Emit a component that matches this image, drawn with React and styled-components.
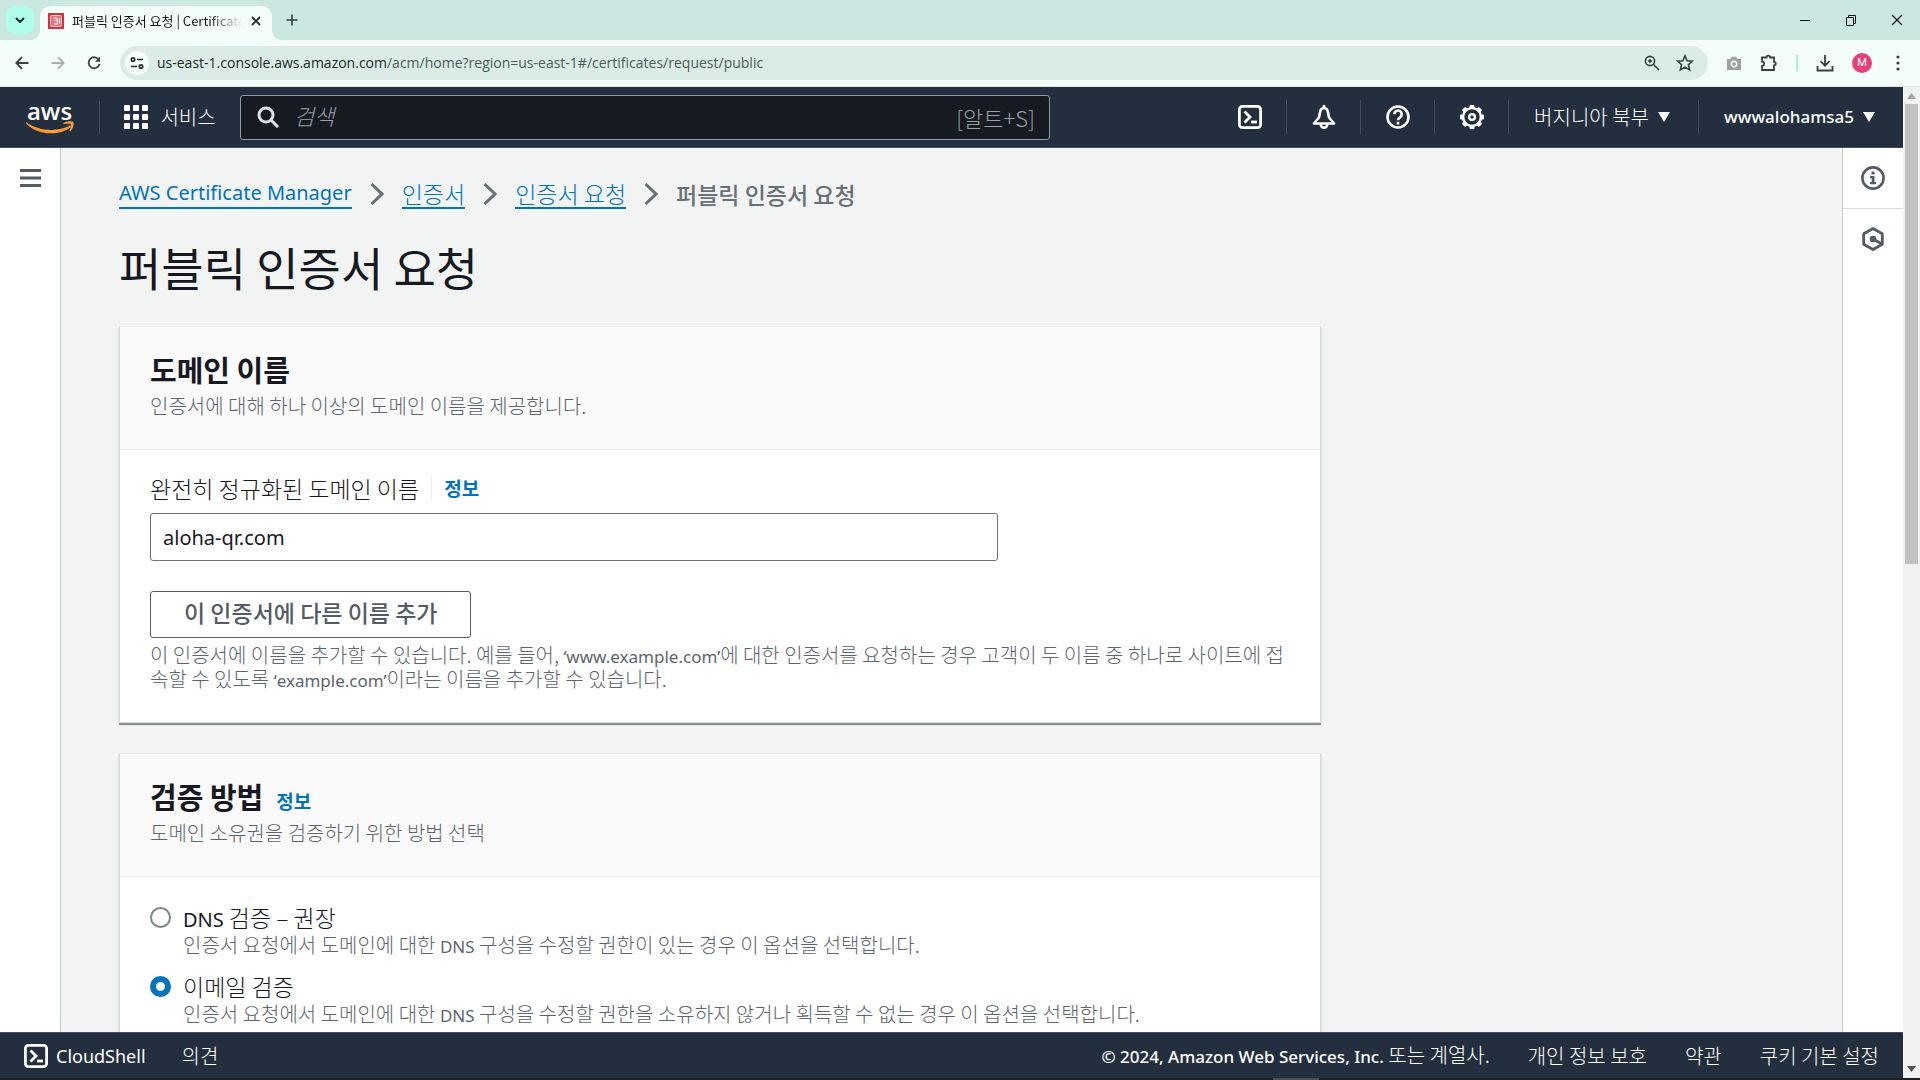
import { useState } from 'react';
import styled, { createGlobalStyle } from 'styled-components';

function App() {
  return (
    <Window>
      <GlobalStyle />
      <TabStrip />
      <Toolbar />
      <Viewport>
        <Page>
          <TopNav />
          <Body>
            <SideRail $side="left">
              <RailButton aria-label="탐색 열기">
                <MenuIcon />
              </RailButton>
            </SideRail>
            <Content />
            <SideRail $side="right">
              <RailButton aria-label="도움말 패널">
                <InfoIcon />
              </RailButton>
              <RailButton aria-label="자습서">
                <HexIcon />
              </RailButton>
            </SideRail>
          </Body>
          <Footer />
        </Page>
        <Scrollbar />
      </Viewport>
      <Taskbar>
        <TaskMark />
      </Taskbar>
    </Window>
  );
}

/* Browser chrome */

function TabStrip() {
  return (
    <Strip>
      <TabSearch aria-label="탭 검색">
        <svg width="10" height="6" viewBox="0 0 10 6">
          <path d="M1 1l4 4 4-4" fill="none" stroke="#1b2a27" strokeWidth="2" />
        </svg>
      </TabSearch>
      <Tab>
        <Favicon viewBox="0 0 16 16">
          <rect width="16" height="16" fill="#d6303f" />
          <rect x="2.5" y="2.5" width="11" height="11" rx="1" fill="#ef6f79" stroke="#fbd3d6" />
          <path d="M5.500 5h3.500v2.500H6.500M6.500 7.500h3v3.500H6M11.500 5v6" fill="none" stroke="#fff" />
        </Favicon>
        <TabTitle>퍼블릭 인증서 요청 | Certificate</TabTitle>
        <PlainButton aria-label="탭 닫기">
          <svg width="10" height="10" viewBox="0 0 10 10">
            <path d="M1 1l8 8M9 1L1 9" stroke="#22302d" strokeWidth="1.800" />
          </svg>
        </PlainButton>
      </Tab>
      <NewTab aria-label="새 탭">
        <svg width="12" height="12" viewBox="0 0 12 12">
          <path d="M6 0.500v11M0.500 6h11" stroke="#2f3f3b" strokeWidth="1.600" />
        </svg>
      </NewTab>
      <WindowControls>
        <PlainButton aria-label="최소화">
          <svg width="12" height="12" viewBox="0 0 12 12">
            <path d="M1 6.500h10" stroke="#111" />
          </svg>
        </PlainButton>
        <PlainButton aria-label="이전 크기로">
          <svg width="12" height="12" viewBox="0 0 12 12">
            <path d="M1.500 3.500h7v8h-7zM3.500 3.500v-2h7v8h-2" fill="none" stroke="#111" />
          </svg>
        </PlainButton>
        <PlainButton aria-label="닫기">
          <svg width="12" height="12" viewBox="0 0 12 12">
            <path d="M1 1l10 10M11 1L1 11" stroke="#111" strokeWidth="1.200" />
          </svg>
        </PlainButton>
      </WindowControls>
    </Strip>
  );
}

function Toolbar() {
  return (
    <Bar>
      <BarButton aria-label="뒤로">
        <svg width="14" height="14" viewBox="0 0 14 14">
          <path d="M13.500 7H1.500M7 1.200L1.300 7 7 12.800" fill="none" stroke="#33423f" strokeWidth="1.800" />
        </svg>
      </BarButton>
      <BarButton aria-label="앞으로">
        <svg width="14" height="14" viewBox="0 0 14 14">
          <path d="M.5 7h12M7 1.200L12.700 7 7 12.800" fill="none" stroke="#a3b0ad" strokeWidth="1.800" />
        </svg>
      </BarButton>
      <BarButton aria-label="새로고침">
        <svg width="14" height="14" viewBox="0 0 14 14">
          <path d="M12 4.200A5.500 5.500 0 1 0 12.500 8" fill="none" stroke="#33423f" strokeWidth="1.800" />
          <path d="M13 .8v5H8z" fill="#33423f" />
        </svg>
      </BarButton>
      <AddressBar>
        <SiteInfo aria-label="사이트 정보">
          <svg width="14" height="14" viewBox="0 0 14 14">
            <g fill="none" stroke="#22302d" strokeWidth="1.700">
              <circle cx="3" cy="3.500" r="1.700" />
              <path d="M7 3.500h6M1 10.500h6" />
              <circle cx="11" cy="10.500" r="1.700" />
            </g>
          </svg>
        </SiteInfo>
        <Url>
          us-east-1.console.aws.amazon.com
          <span>/acm/home?region=us-east-1#/certificates/request/public</span>
        </Url>
        <PlainButton aria-label="확대/축소">
          <svg width="16" height="16" viewBox="0 0 16 16">
            <g fill="none" stroke="#33423f" strokeWidth="1.600">
              <circle cx="6" cy="6" r="4.600" />
              <path d="M9.500 9.500l5.500 5.500" />
            </g>
            <path d="M6 3.800L8.200 6 6 8.200 3.800 6z" fill="#33423f" />
          </svg>
        </PlainButton>
        <PlainButton aria-label="북마크">
          <svg width="18" height="18" viewBox="0 0 18 18">
            <path
              d="M9 1.800l2.100 4.900 5.300.5-4 3.500 1.200 5.200L9 13.100l-4.600 2.800 1.200-5.200-4-3.500 5.300-.5z"
              fill="none"
              stroke="#33423f"
              strokeWidth="1.600"
            />
          </svg>
        </PlainButton>
      </AddressBar>
      <Extensions>
        <PlainButton aria-label="캡처">
          <svg width="16" height="14" viewBox="0 0 16 14">
            <path d="M1 3h3.500L6 .8h4L11.500 3H15v11H1z" fill="#9aa3a1" />
            <circle cx="8" cy="8" r="2.700" fill="none" stroke="#fff" strokeWidth="1.500" />
          </svg>
        </PlainButton>
        <PlainButton aria-label="확장 프로그램">
          <svg width="18" height="18" viewBox="0 0 18 18">
            <path
              d="M2 3.500h4.500a1.800 1.800 0 0 1 3.600 0H14v4.300a1.800 1.800 0 0 1 0 3.600V16H2v-4.200a2.100 2.100 0 0 0 0-4.200z"
              fill="none"
              stroke="#33423f"
              strokeWidth="1.800"
            />
          </svg>
        </PlainButton>
        <BarDivider />
        <PlainButton aria-label="다운로드">
          <svg width="18" height="18" viewBox="0 0 18 18">
            <path d="M9 1v10.500M4.500 7.200L9 11.700l4.500-4.500M1.500 12v4.500h15V12" fill="none" stroke="#33423f" strokeWidth="1.800" />
          </svg>
        </PlainButton>
        <Avatar>M</Avatar>
        <PlainButton aria-label="메뉴">
          <svg width="4" height="16" viewBox="0 0 4 16">
            <g fill="#33423f">
              <circle cx="2" cy="2" r="1.600" />
              <circle cx="2" cy="8" r="1.600" />
              <circle cx="2" cy="14" r="1.600" />
            </g>
          </svg>
        </PlainButton>
      </Extensions>
    </Bar>
  );
}

function Scrollbar() {
  return (
    <Track>
      <svg width="9" height="6" viewBox="0 0 9 6">
        <path d="M0 6l4.500-6L9 6z" fill="#a3a3a3" />
      </svg>
      <Thumb />
      <svg width="9" height="6" viewBox="0 0 9 6">
        <path d="M0 0l4.500 6L9 0z" fill="#505050" />
      </svg>
    </Track>
  );
}

/* Console */

function TopNav() {
  return (
    <Nav>
      <Logo href="#home">
        aws
        <svg width="48" height="13" viewBox="0 0 48 13">
          <path d="M.6 1.500C13 10.500 32 11 43.500 4.800c1.600-.8 2.200.6.900 1.600C33 15 12 14.800.2 2.400c-.5-.6-.2-1.200.4-.9z" fill="#f79b34" />
          <path d="M37.500 2c2.600-1.900 8-2.200 9.600-1.100 1.300 1 .2 6.500-2.600 9.300-.7.600-1.200.3-.9-.5.800-1.900 1.800-5.400 1.200-6.300-.8-.9-4.700-.6-6.600-.4-.9.100-1.300-.5-.7-1z" fill="#f79b34" />
        </svg>
      </Logo>
      <Services>
        <svg width="24" height="24" viewBox="0 0 24 24" fill="#fff">
          {[0, 9, 18].map((y) => [0, 9, 18].map((x) => <rect key={`${x}-${y}`} x={x} y={y} width="6" height="6" rx="1" />))}
        </svg>
        서비스
      </Services>
      <SearchBox>
        <svg width="22" height="22" viewBox="0 0 22 22">
          <g fill="none" stroke="#dfe3e6" strokeWidth="3">
            <circle cx="9" cy="9" r="7" />
            <path d="M14 14l7 7" />
          </g>
        </svg>
        <input type="search" aria-label="검색" placeholder="검색" />
        <span>[알트+S]</span>
      </SearchBox>
      <NavItems>
        <NavItem aria-label="CloudShell">
          <ShellIcon />
        </NavItem>
        <NavItem aria-label="알림">
          <svg width="24" height="24" viewBox="0 0 24 24">
            <g fill="none" stroke="#fff" strokeWidth="2.600" strokeLinejoin="round">
              <path d="M12 0v3M2 18.500h20L17 12.500l-1.200-6C15.300 4.300 14 3 12 3S8.700 4.300 8.200 6.500L7 12.500z" />
              <path d="M8.800 19v.6a3.200 3.200 0 0 0 6.400 0V19" />
            </g>
          </svg>
        </NavItem>
        <NavItem aria-label="지원">
          <svg width="24" height="24" viewBox="0 0 24 24">
            <g fill="none" stroke="#fff" strokeWidth="2.600">
              <circle cx="12" cy="12" r="10.500" />
              <path d="M8.300 9.300a3.700 3.700 0 1 1 5.800 3c-1.400 1-2.100 1.500-2.100 3" />
              <path d="M12 16.800v2.700" />
            </g>
          </svg>
        </NavItem>
        <NavItem aria-label="설정">
          <GearIcon />
        </NavItem>
        <NavMenu>
          버지니아 북부
          <Caret />
        </NavMenu>
        <NavMenu $latin>
          wwwalohamsa5
          <Caret />
        </NavMenu>
      </NavItems>
    </Nav>
  );
}

function Content() {
  const [method, setMethod] = useState('email');

  return (
    <Main>
      <Breadcrumbs aria-label="이동 경로">
        <CrumbLink href="#acm" $latin>AWS Certificate Manager</CrumbLink>
        <Chevron />
        <CrumbLink href="#certificates">인증서</CrumbLink>
        <Chevron />
        <CrumbLink href="#request">인증서 요청</CrumbLink>
        <Chevron />
        <CurrentCrumb>퍼블릭 인증서 요청</CurrentCrumb>
      </Breadcrumbs>
      <PageTitle>퍼블릭 인증서 요청</PageTitle>

      <Card>
        <CardHeader>
          <CardTitle>도메인 이름</CardTitle>
          <Description>인증서에 대해 하나 이상의 도메인 이름을 제공합니다.</Description>
        </CardHeader>
        <CardBody>
          <FieldHead>
            <label htmlFor="domain">완전히 정규화된 도메인 이름</label>
            <LabelDivider />
            <InfoLink href="#domain-info">정보</InfoLink>
          </FieldHead>
          <DomainInput id="domain" type="text" defaultValue="aloha-qr.com" />
          <AddButton type="button">이 인증서에 다른 이름 추가</AddButton>
          <Description>
            이 인증서에 이름을 추가할 수 있습니다. 예를 들어, <Latin>‘www.example.com’</Latin>에 대한 인증서를 요청하는 경우 고객이 두 이름 중 하나로 사이트에 접속할 수 있도록 <Latin>‘example.com’</Latin>이라는 이름을 추가할 수 있습니다.
          </Description>
        </CardBody>
      </Card>

      <Card>
        <CardHeader>
          <CardTitle>
            검증 방법
            <InfoLink href="#validation-info">정보</InfoLink>
          </CardTitle>
          <Description>도메인 소유권을 검증하기 위한 방법 선택</Description>
        </CardHeader>
        <CardBody>
          <Option>
            <input type="radio" name="method" checked={method === 'dns'} onChange={() => setMethod('dns')} />
            <span>
              <Latin $large>DNS</Latin> 검증 – 권장
              <Description as="small">
                인증서 요청에서 도메인에 대한 <Latin>DNS</Latin> 구성을 수정할 권한이 있는 경우 이 옵션을 선택합니다.
              </Description>
            </span>
          </Option>
          <Option>
            <input type="radio" name="method" checked={method === 'email'} onChange={() => setMethod('email')} />
            <span>
              이메일 검증
              <Description as="small">
                인증서 요청에서 도메인에 대한 <Latin>DNS</Latin> 구성을 수정할 권한을 소유하지 않거나 획득할 수 없는 경우 이 옵션을 선택합니다.
              </Description>
            </span>
          </Option>
        </CardBody>
      </Card>
    </Main>
  );
}

function Footer() {
  return (
    <FooterBar>
      <FooterButton $latin>
        <ShellIcon />
        CloudShell
      </FooterButton>
      <FooterButton>의견</FooterButton>
      <Legal>
        <span><b>© 2024, Amazon Web Services, Inc.</b> 또는 계열사.</span>
        <a href="#privacy">개인 정보 보호</a>
        <a href="#terms">약관</a>
        <a href="#cookies">쿠키 기본 설정</a>
      </Legal>
    </FooterBar>
  );
}

/* Icons */

function ShellIcon() {
  return (
    <svg width="24" height="24" viewBox="0 0 24 24">
      <g fill="none" stroke="#fff" strokeWidth="2.800">
        <rect x="1.400" y="1.400" width="21.200" height="21.200" rx="3" />
        <path d="M6.500 6.500l5.500 5.500-5.500 5.500" />
        <path d="M13 17h6" />
      </g>
    </svg>
  );
}

function GearIcon() {
  const teeth = [0, 45, 90, 135, 180, 225, 270, 315];
  return (
    <svg width="24" height="24" viewBox="0 0 24 24">
      {teeth.map((angle) => (
        <rect key={angle} x="9.500" y="0" width="5" height="4" rx="1" fill="#fff" transform={`rotate(${angle} 12 12)`} />
      ))}
      <circle cx="12" cy="12" r="8.900" fill="none" stroke="#fff" strokeWidth="2.400" />
      <circle cx="12" cy="12" r="2.900" fill="none" stroke="#fff" strokeWidth="2.400" />
    </svg>
  );
}

function MenuIcon() {
  return (
    <svg width="21" height="18" viewBox="0 0 21 18">
      <path d="M0 1.500h21M0 9h21M0 16.500h21" stroke="#545b64" strokeWidth="2.800" />
    </svg>
  );
}

function InfoIcon() {
  return (
    <svg width="24" height="24" viewBox="0 0 24 24">
      <circle cx="12" cy="12" r="10.600" fill="none" stroke="#545b64" strokeWidth="2.600" />
      <path d="M10.500 5.500h3v3h-3zM9 10h4.500v6H15v2.300H9V16h1.700v-3.700H9z" fill="#545b64" />
    </svg>
  );
}

function HexIcon() {
  return (
    <svg width="24" height="24" viewBox="0 0 24 24">
      <path d="M12 1.500l9.300 5.200v10.600L12 22.500l-9.300-5.200V6.700z" fill="none" stroke="#545b64" strokeWidth="2.800" strokeLinejoin="round" />
      <circle cx="12" cy="12" r="3.300" fill="#545b64" />
      <path d="M12 12l9 5" stroke="#545b64" strokeWidth="2.800" />
    </svg>
  );
}

function Chevron() {
  return (
    <svg width="14" height="22" viewBox="0 0 14 22">
      <path d="M1.500 1l10.500 10L1.500 21" fill="none" stroke="#687078" strokeWidth="3" />
    </svg>
  );
}

function Caret() {
  return (
    <svg width="12" height="10" viewBox="0 0 12 10">
      <path d="M0 0h12L6 10z" fill="#fff" />
    </svg>
  );
}

const GlobalStyle = createGlobalStyle`
  *, *::before, *::after {
    box-sizing: border-box;
  }

  body {
    margin: 0;
    font-family: 'Noto Sans CJK KR', 'Noto Sans', sans-serif;
    font-weight: 300;
    color: #16191f;
  }

  button, input {
    font: inherit;
    color: inherit;
  }

  svg {
    display: block;
    flex: none;
  }
`;

const latin = "'Noto Sans', 'Noto Sans CJK KR', sans-serif";

const Window = styled.div`
  display: flex;
  flex-direction: column;
  height: 100vh;
  overflow: hidden;
`;

const PlainButton = styled.button`
  display: flex;
  align-items: center;
  justify-content: center;
  padding: 0;
  border: 0;
  background: none;
`;

const Latin = styled.span`
  font-family: ${latin};
  font-size: ${(props) => (props.$large ? 20 : 17)}px;
  font-weight: 400;
  line-height: 20px;
`;

const Strip = styled.header`
  flex: none;
  display: flex;
  align-items: center;
  height: 40px;
  padding: 0 17px 0 6px;
  background: #cbe7e1;
`;

const TabSearch = styled(PlainButton)`
  width: 28px;
  height: 28px;
  border-radius: 9px;
  background: #b1fdec;
`;

const Tab = styled.div`
  position: relative;
  display: flex;
  align-items: center;
  gap: 8px;
  width: 232px;
  height: 34px;
  margin: 6px 0 0 6px;
  padding: 0 11px 4px 8px;
  border-radius: 10px 10px 0 0;
  background: #f3fdfa;

  &::before,
  &::after {
    content: '';
    position: absolute;
    bottom: 0;
    width: 10px;
    height: 10px;
  }

  &::before {
    right: 100%;
    background: radial-gradient(circle at 0 0, transparent 10px, #f3fdfa 10px);
  }

  &::after {
    left: 100%;
    background: radial-gradient(circle at 100% 0, transparent 10px, #f3fdfa 10px);
  }
`;

const Favicon = styled.svg`
  width: 16px;
  height: 16px;
`;

const TabTitle = styled.span`
  flex: 1;
  overflow: hidden;
  white-space: nowrap;
  font-size: 13px;
  line-height: 20px;
  font-weight: 400;
  mask-image: linear-gradient(to right, #000 80%, transparent);
`;

const NewTab = styled(PlainButton)`
  width: 28px;
  height: 28px;
  margin-left: 6px;
`;

const WindowControls = styled.div`
  display: flex;
  gap: 34px;
  margin-left: auto;
`;

const Bar = styled.div`
  flex: none;
  display: flex;
  align-items: center;
  height: 47px;
  padding: 0 20px 0 4px;
  border-bottom: 1px solid #dbe5e2;
  background: #f3fdfa;
`;

const BarButton = styled(PlainButton)`
  width: 36px;
  height: 36px;
`;

const AddressBar = styled.div`
  flex: 1;
  display: flex;
  align-items: center;
  gap: 16px;
  height: 34px;
  margin-left: 8px;
  padding: 0 14px 0 5px;
  border-radius: 17px;
  background: #dbece7;
`;

const SiteInfo = styled(PlainButton)`
  width: 24px;
  height: 24px;
  border-radius: 50%;
  background: #f6fffc;
`;

const Url = styled.span`
  flex: 1;
  margin-left: -8px;
  font-family: 'Open Sans', 'Noto Sans', sans-serif;
  font-size: 14px;
  font-weight: 400;
  line-height: 20px;
  color: #1c2927;

  span {
    color: #4c5c58;
  }
`;

const Extensions = styled.div`
  display: flex;
  align-items: center;
  gap: 18px;
  margin-left: 18px;
`;

const BarDivider = styled.span`
  width: 2px;
  height: 16px;
  background: #a8ecdc;
`;

const Avatar = styled.span`
  width: 20px;
  height: 20px;
  margin-right: 6px;
  border-radius: 50%;
  background: #e6407b;
  color: #fff;
  font-family: Roboto, sans-serif;
  font-size: 11px;
  font-weight: 400;
  line-height: 20px;
  text-align: center;
`;

const Viewport = styled.div`
  flex: 1;
  display: flex;
  min-height: 0;
`;

const Page = styled.div`
  flex: 1;
  display: flex;
  flex-direction: column;
  min-width: 0;
`;

const Track = styled.div`
  display: flex;
  flex-direction: column;
  align-items: center;
  width: 17px;
  padding: 6px 0;
  background: #f1f1f1;
`;

const Thumb = styled.div`
  width: 13px;
  height: 47%;
  margin: 5px 0 auto;
  background: #c1c1c1;
`;

const Taskbar = styled.div`
  flex: none;
  height: 2px;
  padding-left: 66.3%;
  background: #1a2026;
`;

const TaskMark = styled.div`
  width: 46px;
  height: 2px;
  background: #4b5055;
`;

const Nav = styled.nav`
  flex: none;
  display: flex;
  align-items: center;
  height: 61px;
  border-bottom: 1px solid #414d5c;
  background: #232f3e;
  color: #fff;
  font-size: 20px;
  line-height: 28px;
`;

const Logo = styled.a`
  display: flex;
  flex-direction: column;
  align-items: center;
  width: 100px;
  border-right: 1px solid #414d5c;
  color: #fff;
  font-family: 'Open Sans', sans-serif;
  font-size: 24px;
  font-weight: 600;
  line-height: 20px;
  text-decoration: none;
`;

const Services = styled(PlainButton)`
  gap: 12px;
  width: 140px;
  white-space: nowrap;
`;

const SearchBox = styled.label`
  flex: 0 1 810px;
  display: flex;
  align-items: center;
  gap: 15px;
  height: 45px;
  padding: 0 14px 0 16px;
  border: 1px solid #8d99a5;
  border-radius: 3px;
  background: #161a21;
  color: #95a0aa;

  input {
    flex: 1;
    min-width: 0;
    padding: 0 0 4px;
    border: 0;
    outline: 0;
    background: none;
    font-size: 22px;
    font-style: italic;
  }

  input::placeholder {
    color: #95a0aa;
  }

  span {
    font-size: 22px;
  }
`;

const NavItems = styled.div`
  display: flex;
  align-items: center;
  margin-left: auto;
`;

const NavItem = styled(PlainButton)`
  width: 74px;
  height: 34px;
  border-right: 1px solid #414d5c;
`;

const NavMenu = styled(PlainButton)`
  gap: 9px;
  height: 34px;
  padding: 0 28px 0 25px;
  font-family: ${(props) => (props.$latin ? latin : 'inherit')};
  font-size: ${(props) => (props.$latin ? 17 : 20)}px;
  font-weight: ${(props) => (props.$latin ? 500 : 'inherit')};
  white-space: nowrap;

  & + & {
    border-left: 1px solid #414d5c;
  }
`;

const Body = styled.div`
  flex: 1;
  display: flex;
  min-height: 0;
  background: #f2f3f3;
`;

const SideRail = styled.aside`
  flex: none;
  width: 61px;
  border: 0 solid #c6cbcb;
  border-width: ${(props) => (props.$side === 'left' ? '0 1px 0 0' : '0 0 0 1px')};
  background: #fff;
`;

const RailButton = styled(PlainButton)`
  width: 100%;
  height: 60px;

  & + & {
    height: 61px;
    border-top: 1px solid #d5dbdb;
  }
`;

const Main = styled.main`
  flex: 1;
  min-width: 0;
  overflow: hidden;
  padding: 30px 58px 0;
`;

const Breadcrumbs = styled.nav`
  display: flex;
  align-items: center;
  gap: 18px;
  height: 32px;
  font-size: 23px;
  line-height: 28px;
`;

const CrumbLink = styled.a`
  border-bottom: 2px solid #0073bb;
  color: #0073bb;
  font-family: ${(props) => (props.$latin ? latin : 'inherit')};
  font-size: ${(props) => (props.$latin ? 20 : 23)}px;
  font-weight: ${(props) => (props.$latin ? 400 : 'inherit')};
  text-decoration: none;
`;

const CurrentCrumb = styled.span`
  color: #687078;
  font-weight: 500;
`;

const PageTitle = styled.h1`
  margin: 26px 0 30px;
  font-size: 46px;
  font-weight: 400;
  line-height: 60px;
`;

const Card = styled.section`
  max-width: 1202px;
  margin-bottom: 30px;
  border: 1px solid #d5dbdb;
  border-top-color: #eaeded;
  background: #fff;
  box-shadow: 0 2px 1px #8b9494;
`;

const CardHeader = styled.div`
  padding: 24px 30px 31px;
  border-bottom: 1px solid #eaeded;
  background: #fafafa;
`;

const CardTitle = styled.h2`
  display: flex;
  align-items: baseline;
  gap: 13px;
  margin: 0 0 7px;
  font-size: 29px;
  font-weight: 700;
  line-height: 36px;
`;

const CardBody = styled.div`
  padding: 24px 24px 31px 30px;
`;

const Description = styled.p`
  display: block;
  margin: 0;
  color: #5d656c;
  font-size: 20px;
  line-height: 24px;
`;

const FieldHead = styled.div`
  display: flex;
  align-items: center;
  font-size: 23px;
  line-height: 28px;
`;

const LabelDivider = styled.span`
  width: 1px;
  height: 24px;
  margin: 0 12px;
  background: #eaeded;
`;

const InfoLink = styled.a`
  color: #0073bb;
  font-size: 19px;
  font-weight: 700;
  line-height: 24px;
  text-decoration: none;
`;

const DomainInput = styled.input`
  display: block;
  width: 75%;
  max-width: 848px;
  height: 48px;
  margin: 11px 0 30px;
  padding: 0 12px;
  border: 1px solid #687078;
  border-radius: 3px;
  font-family: ${latin};
  font-size: 20px;
  font-weight: 400;
`;

const AddButton = styled.button`
  display: block;
  height: 47px;
  margin-bottom: 5px;
  padding: 0 33px 5px;
  border: 1px solid #545b64;
  border-radius: 3px;
  background: #fff;
  color: #545b64;
  font-size: 23px;
  font-weight: 500;
  line-height: 32px;
`;

const Option = styled.label`
  display: flex;
  align-items: flex-start;
  gap: 12px;
  margin-bottom: 13px;
  font-size: 23px;
  line-height: 32px;

  input {
    flex: none;
    appearance: none;
    width: 21px;
    height: 21px;
    margin: 6px 0 0;
    border: 2px solid #7d868c;
    border-radius: 50%;
    background: #fff;
  }

  input:checked {
    border: 6px solid #0073bb;
  }
`;

const FooterBar = styled.footer`
  flex: none;
  display: flex;
  align-items: center;
  gap: 36px;
  height: 46px;
  padding: 0 24px;
  border-top: 1px solid #414d5c;
  background: #232f3e;
  color: #fff;
  font-size: 20px;
  line-height: 28px;
  white-space: nowrap;
`;

const FooterButton = styled(PlainButton)`
  gap: 8px;
  font-family: ${(props) => (props.$latin ? latin : 'inherit')};
  font-size: ${(props) => (props.$latin ? 18 : 20)}px;
  font-weight: ${(props) => (props.$latin ? 400 : 'inherit')};
`;

const Legal = styled.div`
  display: flex;
  align-items: center;
  gap: 38px;
  margin-left: auto;

  b {
    font-family: ${latin};
    font-size: 17px;
    font-weight: 500;
  }

  a {
    color: inherit;
    text-decoration: none;
  }
`;

export default App;
